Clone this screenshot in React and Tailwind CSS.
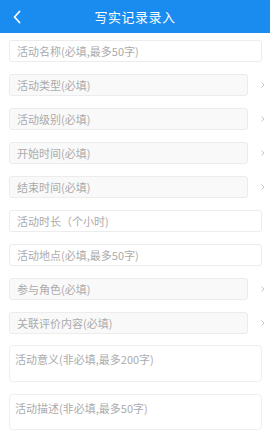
import React from "react";

const font = { fontFamily: '"Noto Sans CJK SC", "Noto Sans", sans-serif' };

function Chevron() {
  return (
    <svg width="6" height="8" viewBox="0 0 6 8" className="shrink-0">
      <path d="M1.5 1.5 L4 4 L1.5 6.5" fill="none" stroke="#c4c4c4" strokeWidth="1" />
    </svg>
  );
}

function TextField({ label }) {
  return (
    <div className="h-[22px] w-full rounded-[3px] border border-[#ececec] bg-white flex items-center pl-[7px] text-[11px] text-[#ababab]">
      {label}
    </div>
  );
}

function SelectField({ label }) {
  return (
    <div className="flex items-center w-full">
      <div className="h-[22px] w-[239px] rounded-[3px] border border-[#ececec] bg-[#f9f9f9] flex items-center pl-[7px] text-[11px] text-[#ababab]">
        {label}
      </div>
      <div className="flex-1 flex justify-end -mr-[4px]">
        <Chevron />
      </div>
    </div>
  );
}

function AreaField({ label, h }) {
  return (
    <div className={`${h} w-full rounded-[4px] border border-[#efefef] bg-white pl-[5px] pt-[6px] text-[11px] leading-[14px] text-[#ababab]`}>
      {label}
    </div>
  );
}

export default function App() {
  return (
    <div className="w-[270px] h-[439px] bg-white overflow-hidden" style={font}>
      <div className="h-[33px] bg-[#1a8cf0] relative flex items-center justify-center">
        <svg width="10" height="14" viewBox="0 0 10 14" className="absolute left-[12px] top-[10px]">
          <path d="M7.5 1.5 L2.5 7 L7.5 12.5" fill="none" stroke="white" strokeWidth="1.8" strokeLinecap="round" strokeLinejoin="round" />
        </svg>
        <span className="text-white text-[13px] tracking-[0.5px]">写实记录录入</span>
      </div>
      <div className="pl-[9px] pr-[8px] pt-[7px] flex flex-col gap-[12px]">
        <TextField label="活动名称(必填,最多50字)" />
        <SelectField label="活动类型(必填)" />
        <SelectField label="活动级别(必填)" />
        <SelectField label="开始时间(必填)" />
        <SelectField label="结束时间(必填)" />
        <TextField label="活动时长（个小时)" />
        <TextField label="活动地点(必填,最多50字)" />
        <SelectField label="参与角色(必填)" />
        <SelectField label="关联评价内容(必填)" />
        <div className="-mt-[1px]">
          <AreaField label="活动意义(非必填,最多200字)" h="h-[37px]" />
        </div>
        <AreaField label="活动描述(非必填,最多50字)" h="h-[36px]" />
      </div>
    </div>
  );
}
